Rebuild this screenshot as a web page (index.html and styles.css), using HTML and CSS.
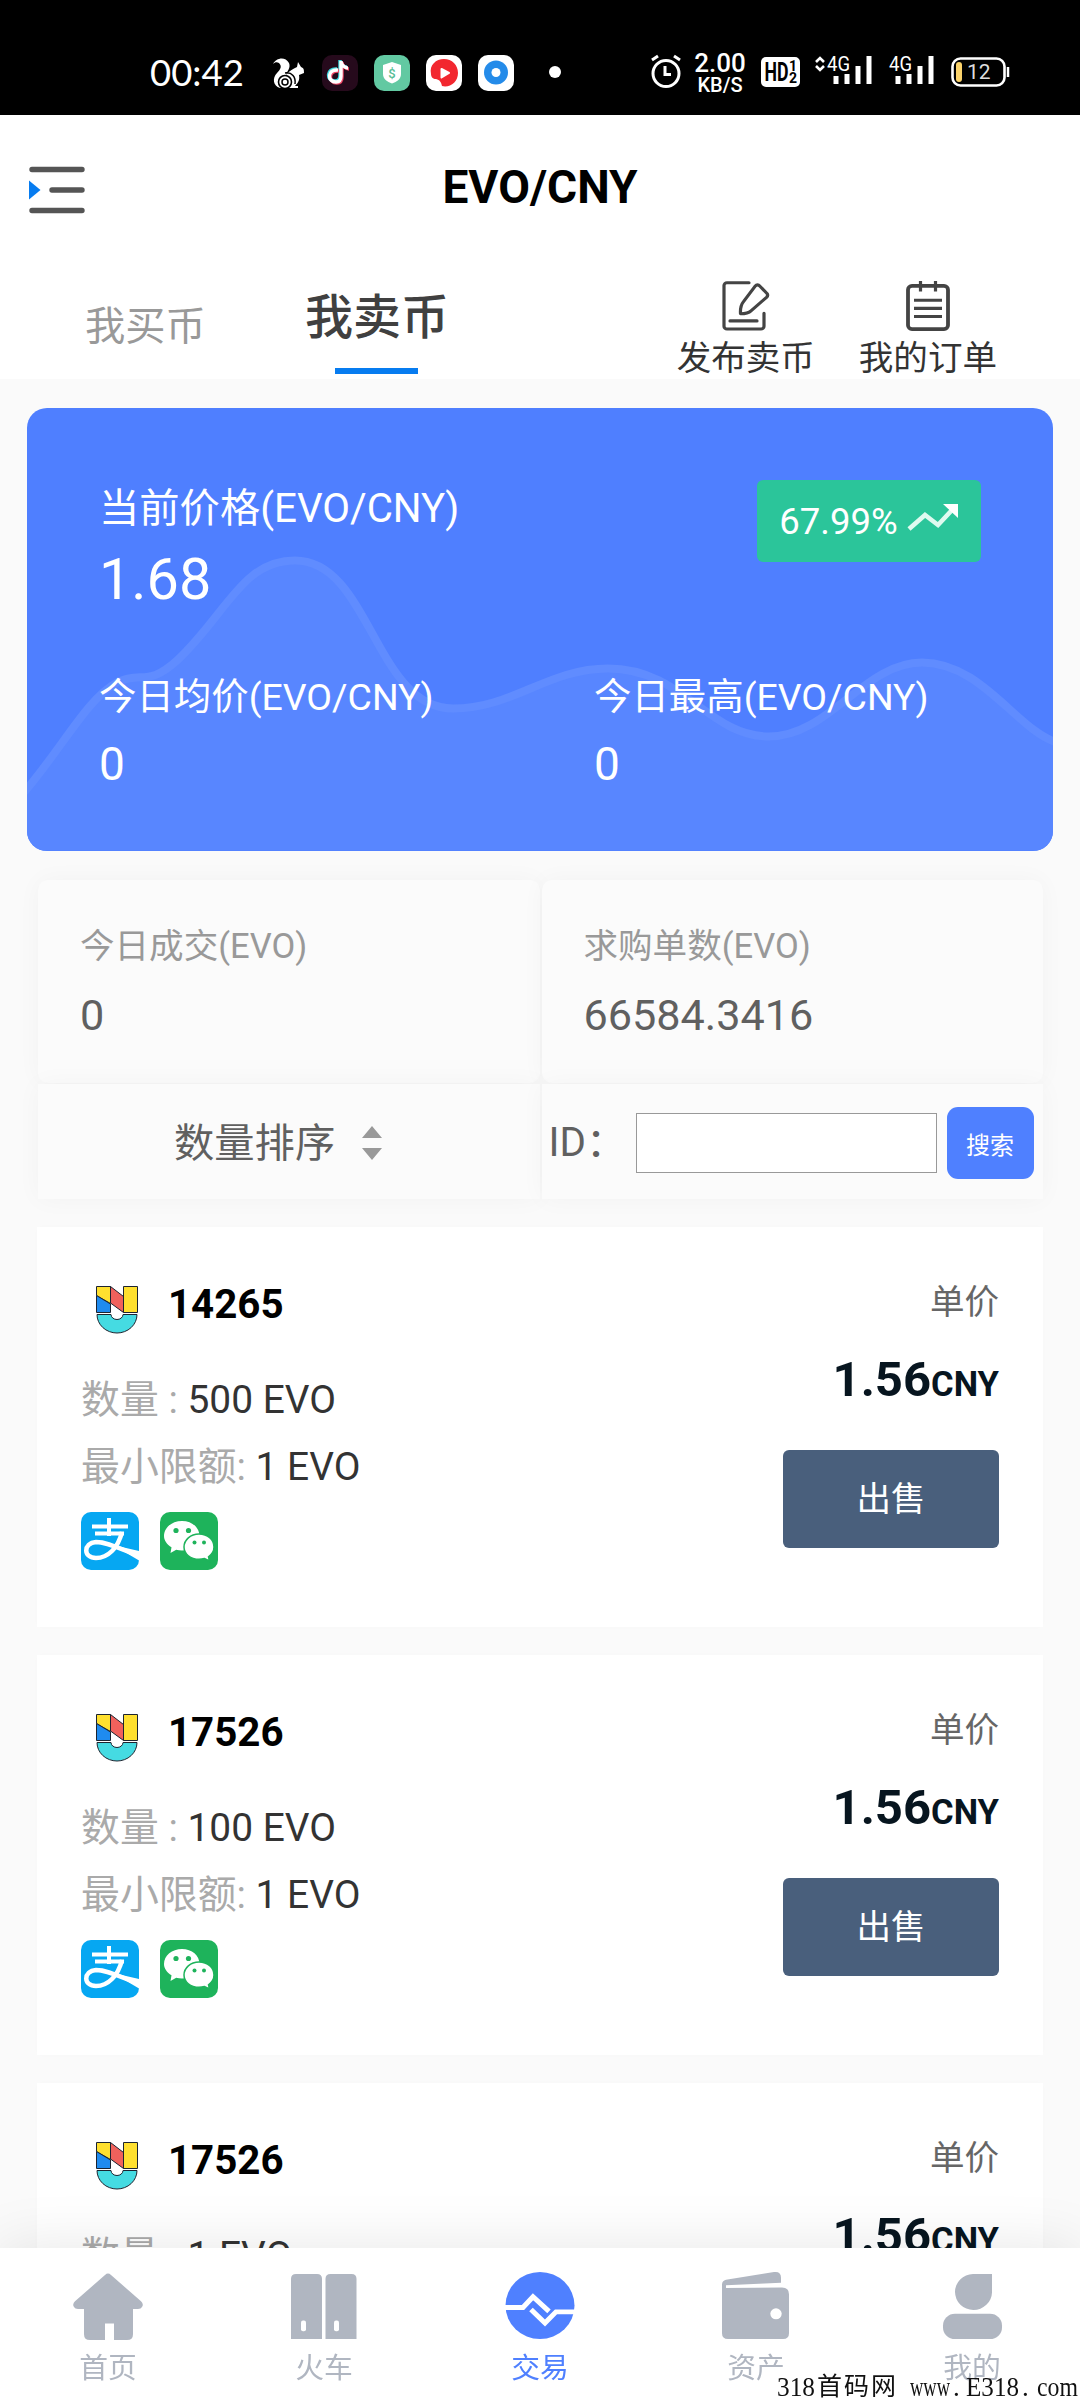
FILE: index.html
```html
<!DOCTYPE html>
<html lang="zh-CN">
<head>
<meta charset="utf-8">
<title>EVO/CNY</title>
<link rel="stylesheet" href="styles.css">
</head>
<body>
<svg class="defs" width="0" height="0" aria-hidden="true">
  <symbol id="logo" viewBox="0 0 72 72">
    <g stroke="#1c2430" stroke-width="1" stroke-linejoin="round">
      <path d="M15.500 15.500h14v17l-14-8z" fill="#ffe02f"/>
      <path d="M15.500 24.500l14 8.500v8.500h-14z" fill="#1f8bef"/>
      <path d="M29.500 15.500l13 10v16l-13-9.500z" fill="#f0615c"/>
      <path d="M42.500 15.500h14v26h-14z" fill="#ffe02f"/>
      <path d="M16 43.500h14a6 5 0 0 0 12 0h14a20 18.500 0 0 1-40 0z" fill="#45dbe2"/>
    </g>
  </symbol>
  <symbol id="alipay" viewBox="0 0 58 58">
    <rect width="58" height="58" rx="10" fill="#06a7f2"/>
    <path d="M11 14.500h36M28 6v18M14 21.500h29" fill="none" stroke="#fff" stroke-width="4"/>
    <path d="M41 20C37 36 27 46 15 46 2 46 2 31 15 30c12 0 24 7 43 14" fill="none" stroke="#fff" stroke-width="4.500"/>
    <path d="M32 33l26 6v9.500z" fill="#fff"/>
  </symbol>
  <symbol id="wechat" viewBox="0 0 58 58">
    <rect width="58" height="58" rx="10" fill="#1eb35b"/>
    <path d="M22 9c10 0 17.500 6.500 17.500 15S32 38.500 22 38.500c-2 0-4-.3-5.800-.8L10.500 41l1-5.800C7 32.500 4 28.500 4 24 4 15.500 12 9 22 9z" fill="#fff"/>
    <path d="M39 22c8.500 0 15 5.500 15 13 0 4-2.300 7.500-5.500 9.800l1 4.200-5-2.500c-1.700.5-3.500.8-5.500.8-8.500 0-15-5.300-15-12.300S30.500 22 39 22z" fill="#fff" stroke="#1eb35b" stroke-width="1.500"/>
    <g fill="#1eb35b"><circle cx="16" cy="18.500" r="2.600"/><circle cx="28.500" cy="18.500" r="2.600"/><circle cx="34.500" cy="30.500" r="2"/><circle cx="44" cy="30.500" r="2"/></g>
  </symbol>
</svg>

<div class="status">
  <span class="clock">00:42</span>
  <div class="apps">
    <svg width="32" height="34" viewBox="0 0 32 34"><path d="M1 7C4 1 13-1 17 6c2 5-2 8-3 12 3-4 7-6 11-8l1-5 3 5c3 1 3 3 3 6l-5 2c1 5-1 8-4 11h3v2H8c-7-2-8-10-3-15 4-4 5-7 2-10-2-1-4-1-6 1z" fill="#fff"/><circle cx="13" cy="25" r="6.500" fill="none" stroke="#000" stroke-width="1.600"/><circle cx="13" cy="25" r="3" fill="none" stroke="#000" stroke-width="1.500"/><path d="M13 16c7-1 11 4 10 11" fill="none" stroke="#000" stroke-width="1.500"/></svg>
    <svg width="36" height="36" viewBox="0 0 36 36"><rect width="36" height="36" rx="10" fill="#260a1c"/><g fill="none" stroke-width="3.400"><path d="M16 15c-11-1-11 12-2 12 4 0 5-3 5-6V6c0 4 4 7 7 7" stroke="#3fd9e0" transform="translate(-1 -1)"/><path d="M16 15c-11-1-11 12-2 12 4 0 5-3 5-6V6c0 4 4 7 7 7" stroke="#ef4565" transform="translate(1 1)"/><path d="M16 15c-11-1-11 12-2 12 4 0 5-3 5-6V6c0 4 4 7 7 7" stroke="#fff"/></g></svg>
    <svg width="36" height="36" viewBox="0 0 36 36"><rect width="36" height="36" rx="10" fill="#62c9a2"/><path d="M18 7l9 3v9c0 5-4 7.500-9 9.500-5-2-9-4.500-9-9.500v-9z" fill="#fff"/><text x="18" y="22.500" font-size="13" font-weight="500" text-anchor="middle" fill="#55bd95">$</text></svg>
    <svg width="36" height="36" viewBox="0 0 36 36"><rect width="36" height="36" rx="10" fill="#fff"/><path d="M5 19C3 10 10 4 18 4c8 0 14 6 14 14 0 9-8 15-16 13-1-4-2-6-6-7-3 0-5-2-5-5z" fill="#f2272f"/><path d="M15.500 14l7.500 4-7.500 4.500z" fill="#fff" stroke="#fff" stroke-width="2" stroke-linejoin="round"/></svg>
    <svg width="36" height="36" viewBox="0 0 36 36"><rect width="36" height="36" rx="10" fill="#fff"/><circle cx="18" cy="17.500" r="12" fill="#248be9"/><circle cx="18" cy="17.500" r="4.500" fill="#fff"/></svg>
  </div>
  <i class="dot"></i>
  <div class="signals">
    <svg class="alarm" width="32" height="34" viewBox="0 0 32 34" fill="none" stroke="#fff" stroke-width="3"><circle cx="16" cy="19.500" r="13"/><path d="M15 12v8.500h6M2 6l6-4M30 6l-6-4"/></svg>
    <div class="speed"><b>2.00</b><b>KB/S</b></div>
    <svg class="hd" width="39" height="30" viewBox="0 0 39 30"><rect width="39" height="30" rx="5" fill="#fff"/><text x="3.500" y="24" font-size="26" font-weight="700" textLength="24" lengthAdjust="spacingAndGlyphs">HD</text><text x="28" y="14" font-size="14" font-weight="700">1</text><text x="28" y="26" font-size="14" font-weight="700">2</text></svg>
    <svg class="net1" width="57" height="32" viewBox="0 0 57 32"><path d="M1 8l4-4 4 4M1 12l4 4 4-4" fill="none" stroke="#fff" stroke-width="2.600"/><text x="12" y="17" font-size="20" fill="#fff" textLength="23" lengthAdjust="spacingAndGlyphs">4G</text><path d="M21 22v8M32 20v10M43 12v18M54 2v28" stroke="#fff" stroke-width="5" stroke-linecap="butt"/></svg>
    <svg class="net2" width="45" height="32" viewBox="0 0 45 32"><text x="0" y="17" font-size="20" fill="#fff" textLength="23" lengthAdjust="spacingAndGlyphs">4G</text><path d="M9 22v8M20 20v10M31 12v18M42 2v28" stroke="#fff" stroke-width="5"/></svg>
    <svg class="battery" width="59" height="30" viewBox="0 0 59 30"><rect x="1.500" y="1.500" width="52" height="27" rx="8" fill="none" stroke="#fff" stroke-width="2.600"/><path d="M57 10v10" stroke="#fff" stroke-width="2.500"/><rect x="5" y="5" width="6" height="20" rx="3" fill="#fbd36b"/><text x="16" y="22" font-size="21" fill="#ddd">12</text></svg>
  </div>
</div>

<header class="topbar">
  <svg class="menu" width="56" height="48" viewBox="0 0 56 48"><path d="M3 3.500h50M23 24h30M3 44.500h50" stroke="#555" stroke-width="5.400" stroke-linecap="round"/><path d="M0 14.500l11.500 9.500L0 33.500z" fill="#077cf0"/></svg>
  <h1>EVO/CNY</h1>
</header>

<nav class="tabs">
  <a class="tab">我买币</a>
  <a class="tab active">我卖币</a>
  <div class="actions">
    <a class="action">
      <svg width="48" height="50" viewBox="0 0 48 52" preserveAspectRatio="none" fill="none" stroke="#444" stroke-width="3.200" stroke-linecap="round" stroke-linejoin="round"><path d="M27 1.800H5a3 3 0 0 0-3 3V47a3 3 0 0 0 3 3h34a3 3 0 0 0 3-3V33.500M8 41.500h27"/><path d="M33 5.500q2.500-3 5 0l7 7.500q1.500 2-.5 4L29 31q-3 3-10.500 3-.5-8 3-12.500z"/></svg>
      <span>发布卖币</span>
    </a>
    <a class="action">
      <svg width="48" height="50" viewBox="0 0 48 52" preserveAspectRatio="none" fill="none" stroke="#444" stroke-width="3.200"><rect x="4" y="5" width="40" height="45" rx="4" stroke-width="3.800"/><path d="M16.500 0v11M31.500 0v11M10 20h28M10 28.500h28M10 37h28"/></svg>
      <span>我的订单</span>
    </a>
  </div>
</nav>

<section class="price-card">
  <svg class="wave" width="1026" height="443" viewBox="0 0 1026 442"><path d="M0 381C35 340 60 290 90 274c25-12 30 5 60-22C200 205 215 152 268 152c75 0 80 148 158 148 60 0 95-40 155-40 75 0 100 68 161 68 60 0 95-74 153-74 60 0 95 68 131 78V442H0z" fill="#5886ff"/><path d="M-4 385C35 340 60 290 90 274c25-12 30 5 60-22C200 205 215 152 268 152c75 0 80 148 158 148 60 0 95-40 155-40 75 0 100 68 161 68 60 0 95-74 153-74 60 0 95 68 135 80" fill="none" stroke="#608cff" stroke-width="8"/></svg>
  <div class="card-body">
    <div class="current">
      <div>
        <p class="label">当前价格(EVO/CNY)</p>
        <p class="value">1.68</p>
      </div>
      <div class="badge">67.99%<svg width="52" height="28" viewBox="0 0 52 28"><path d="M2 25L18 11l13 10L46 5" fill="none" stroke="#dffaf0" stroke-width="4.600"/><path d="M36 0h15v14z" fill="#fff"/></svg></div>
    </div>
    <div class="averages">
      <div><p class="label">今日均价(EVO/CNY)</p><p class="value">0</p></div>
      <div><p class="label">今日最高(EVO/CNY)</p><p class="value">0</p></div>
    </div>
  </div>
</section>

<section class="stats">
  <div class="stat"><p class="label">今日成交(EVO)</p><p class="value">0</p></div>
  <div class="stat"><p class="label">求购单数(EVO)</p><p class="value">66584.3416</p></div>
  <div class="filter sort"><span>数量排序</span><svg width="20" height="34" viewBox="0 0 20 34" fill="#999"><path d="M10 0l10 12H0zM10 34L0 22h20z"/></svg></div>
  <div class="filter search"><span>ID：</span><input type="text"><button>搜索</button></div>
</section>

<main class="orders">
  <article class="order">
    <div class="info">
      <div class="who"><svg width="72" height="72"><use href="#logo"/></svg><b>14265</b></div>
      <p>数量 : <em>500 EVO</em></p>
      <p>最小限额: <em>1 EVO</em></p>
      <div class="pays"><svg width="58" height="58"><use href="#alipay"/></svg><svg width="58" height="58"><use href="#wechat"/></svg></div>
    </div>
    <div class="deal"><span class="unit">单价</span><b class="price">1.56<small>CNY</small></b><a class="sell">出售</a></div>
  </article>
  <article class="order">
    <div class="info">
      <div class="who"><svg width="72" height="72"><use href="#logo"/></svg><b>17526</b></div>
      <p>数量 : <em>100 EVO</em></p>
      <p>最小限额: <em>1 EVO</em></p>
      <div class="pays"><svg width="58" height="58"><use href="#alipay"/></svg><svg width="58" height="58"><use href="#wechat"/></svg></div>
    </div>
    <div class="deal"><span class="unit">单价</span><b class="price">1.56<small>CNY</small></b><a class="sell">出售</a></div>
  </article>
  <article class="order">
    <div class="info">
      <div class="who"><svg width="72" height="72"><use href="#logo"/></svg><b>17526</b></div>
      <p>数量 : <em>1 EVO</em></p>
    </div>
    <div class="deal"><span class="unit">单价</span><b class="price">1.56<small>CNY</small></b></div>
  </article>
</main>

<footer class="tabbar">
  <a><svg width="72" height="70" preserveAspectRatio="none" viewBox="0 0 72 72" fill="#b0b6c1"><path d="M33 3q3-3 6 0l30 27q3 3 1 6-1 2-4 2h-5v26q0 6-6 6H42V53h-9v17H18q-6 0-6-6V38H6q-3 0-4-2-2-3 1-6z"/></svg><span>首页</span></a>
  <a><svg width="72" height="70" preserveAspectRatio="none" viewBox="0 0 72 72" fill="#b0b6c1"><path d="M3 69V7q0-5 5-5h21q5 0 5 5v62zM37.500 69V7q0-5 5-5h21q5 0 5 5v62z"/><rect x="13" y="50" width="5" height="11" rx="2" fill="#fff"/><rect x="46" y="50" width="5" height="11" rx="2" fill="#fff"/></svg><span>火车</span></a>
  <a class="on"><svg width="72" height="70" preserveAspectRatio="none" viewBox="0 0 72 72"><circle cx="36" cy="34.500" r="34.500" fill="#4f80ff"/><path d="M0 36.500h19L29 25.500l16 15M27 38.500L41 52.500l11-11.500h20" fill="none" stroke="#fff" stroke-width="5"/></svg><span>交易</span></a>
  <a><svg width="72" height="70" preserveAspectRatio="none" viewBox="0 0 72 72" fill="#b0b6c1"><path d="M2 13q0-4 4-5L54 0q7-1 7 6v5L6 13.500v3L62 16q7 0 7 7v40q0 6-6 6H8q-6 0-6-6z"/><circle cx="56" cy="43" r="5.700" fill="#fff"/></svg><span>资产</span></a>
  <a><svg width="72" height="70" preserveAspectRatio="none" viewBox="0 0 72 72" fill="#b0b6c1"><path d="M37 2h19v19a18.500 18.500 0 1 1-19-19z"/><rect x="7" y="43" width="59" height="26" rx="12"/></svg><span>我的</span></a>
</footer>

<svg class="watermark" width="304" height="28" viewBox="0 0 304 28"><text x="1" y="23" textLength="38" lengthAdjust="spacingAndGlyphs">318</text><text class="han" x="41" y="22" textLength="79">首码网</text><text x="134" y="23" textLength="40" lengthAdjust="spacingAndGlyphs">www</text><text x="177" y="23">.</text><text x="190" y="23" textLength="53" lengthAdjust="spacingAndGlyphs">E318</text><text x="246" y="23">.</text><text x="261" y="23" textLength="41" lengthAdjust="spacingAndGlyphs">com</text></svg>
</body>
</html>
```
FILE: styles.css
```css
* { box-sizing: border-box; margin: 0; padding: 0; }
html, body { width: 1080px; height: 2400px; overflow: hidden; }
body { background: #fafafa; color: #333; font-family: Roboto, "Noto Sans CJK SC", sans-serif; font-size: 40.3px; }
svg { display: block; flex: none; overflow: visible; }
.defs { position: absolute; }

.status { display: flex; height: 115px; padding: 0 70px 0 150px; background: #000; color: #fff; align-items: flex-start; }
.clock { width: 121px; padding-top: 49px; font: 400 36.5px/46px Lato, sans-serif; }
.apps { display: flex; gap: 16px; padding: 55px 0 0 1px; }
.apps svg:first-child { margin: 2px 2px 0 0; }
.dot { width: 12px; height: 12px; margin: 66px 0 0 35px; border-radius: 50%; background: #fff; }
.signals { display: flex; margin-left: auto; padding-top: 54px; align-items: flex-start; }
.speed { display: flex; flex-direction: column; align-items: center; width: 52px; margin: -4px 15px 0 12px; }
.speed b { font-size: 26px; line-height: 26px; font-weight: 500; }
.speed b + b { font-size: 20px; line-height: 18px; }
.hd, .battery { margin-top: 3px; }
.net1 { margin-left: 15px; }
.net2 { margin-left: 17px; }
.battery { margin-left: 17px; }

.topbar { display: flex; align-items: center; height: 144px; padding: 0 29px; background: #fff; }
.menu { margin-top: 5px; }
.topbar h1 { flex: 1; margin-right: 56px; text-align: center; font-size: 46.08px; font-weight: 700; line-height: 60px; color: #000; }

.tabs { display: flex; height: 120px; padding-left: 85px; background: #fff; }
.tab { padding-top: 38px; line-height: 60px; color: #999; }
.tab.active { display: flex; flex-direction: column; align-items: center; margin-left: 99px; padding-top: 29px; font-size: 48px; font-weight: 500; color: #404040; }
.tab.active::after { content: ""; width: 83px; height: 6px; margin-top: 20px; background: #077cf0; }
.actions { display: flex; gap: 44px; margin: 22px 83px 0 auto; }
.action { display: flex; flex-direction: column; align-items: center; font-size: 34.56px; line-height: 50px; color: #333; }
.action span { margin-top: 2px; }

.price-card { position: relative; height: 443px; margin: 29px 27px 0; border-radius: 20px; background: #4f7fff; color: #fff; overflow: hidden; }
.wave { position: absolute; inset: 0; }
.card-body { position: relative; padding: 72px 72px 0 72px; }
.current { display: flex; justify-content: space-between; align-items: flex-start; }
.current .label { margin-top: 1px; line-height: 56px; }
.current .value { margin-top: 7px; font-size: 57.6px; line-height: 72px; }
.badge { display: flex; align-items: center; justify-content: center; gap: 9px; width: 224px; height: 82px; border-radius: 6px; background: #2bc59a; font-size: 36.5px; }
.badge svg { margin-top: -6px; }
.averages { display: grid; grid-template-columns: 495px 1fr; margin-top: 55px; }
.averages .label { font-size: 37.44px; line-height: 52px; }
.averages .value { margin-top: 11px; font-size: 46px; line-height: 60px; }

.stats { display: grid; grid-template-columns: 1fr 1fr; grid-template-rows: 203px 115px; gap: 1px 2px; margin: 29px 37px 0 38px; }
.stat, .filter { box-shadow: 0 0 24px rgba(0, 0, 0, .035); background: #fbfbfb; }
.stat { padding: 41px 0 0 42px; border-radius: 10px; }
.stat .label { font-size: 34.56px; line-height: 50px; color: #999; }
.stat .value { margin-top: 17px; font-size: 43.2px; line-height: 56px; color: #606060; }
.filter { display: flex; align-items: center; color: #606060; }
.filter span { margin-top: -5px; }
.sort { padding-left: 136px; gap: 27px; }
.sort svg { margin-top: 3px; }
.search { padding: 3px 0 0 7px; }
.search span { width: 87px; margin-top: -9px; white-space: nowrap; }
.search input { width: 301px; height: 60px; border: 1px solid #999; background: #fff; }
.search button { width: 87px; height: 72px; margin-left: 10px; border: 0; border-radius: 11px; background: #4f80ff; color: #fff; font: 24px "Noto Sans CJK SC", sans-serif; }

.orders { display: flex; flex-direction: column; gap: 28px; margin: 28px 37px 0 37px; }
.order { display: flex; justify-content: space-between; height: 400px; padding: 44px 44px 0; background: #fff; box-shadow: 0 0 10px rgba(0, 0, 0, .01); }
.who { display: flex; gap: 15px; margin-bottom: 23px; }
.who b { font-weight: 700; line-height: 68px; color: #000; }
.info p { font-size: 38.88px; line-height: 67px; color: #aaa; white-space: pre; }
.info em { font-style: normal; color: #333; }
.pays { display: flex; gap: 21px; margin-top: 12px; }
.deal { display: flex; flex-direction: column; align-items: flex-end; }
.unit { font-size: 34.56px; line-height: 63px; color: #666; }
.price { height: 70px; margin-top: 11px; font-size: 49px; font-weight: 700; line-height: 70px; color: #07151f; }
.price small { font-size: 34.56px; }
.sell { width: 216px; height: 98px; margin-top: 35px; border-radius: 6px; background: #495f7c; color: #fff; font-size: 34.56px; line-height: 98px; text-align: center; }

.tabbar { position: fixed; left: 0; bottom: 0; display: grid; grid-template-columns: repeat(5, 1fr); width: 1080px; height: 152px; padding-top: 24px; background: #fff; box-shadow: 0 0 60px rgba(0, 0, 0, .1); }
.tabbar a { display: flex; flex-direction: column; align-items: center; font-size: 28.8px; line-height: 40px; color: #b0b6c1; }
.tabbar span { margin-top: 6px; }
.tabbar .on { color: #4f80ff; }
.watermark { position: fixed; right: 0; bottom: -1px; font: 27px "Liberation Serif", serif; fill: #111; }
.watermark .han { font: 25px "Noto Sans CJK SC", sans-serif; }
```
